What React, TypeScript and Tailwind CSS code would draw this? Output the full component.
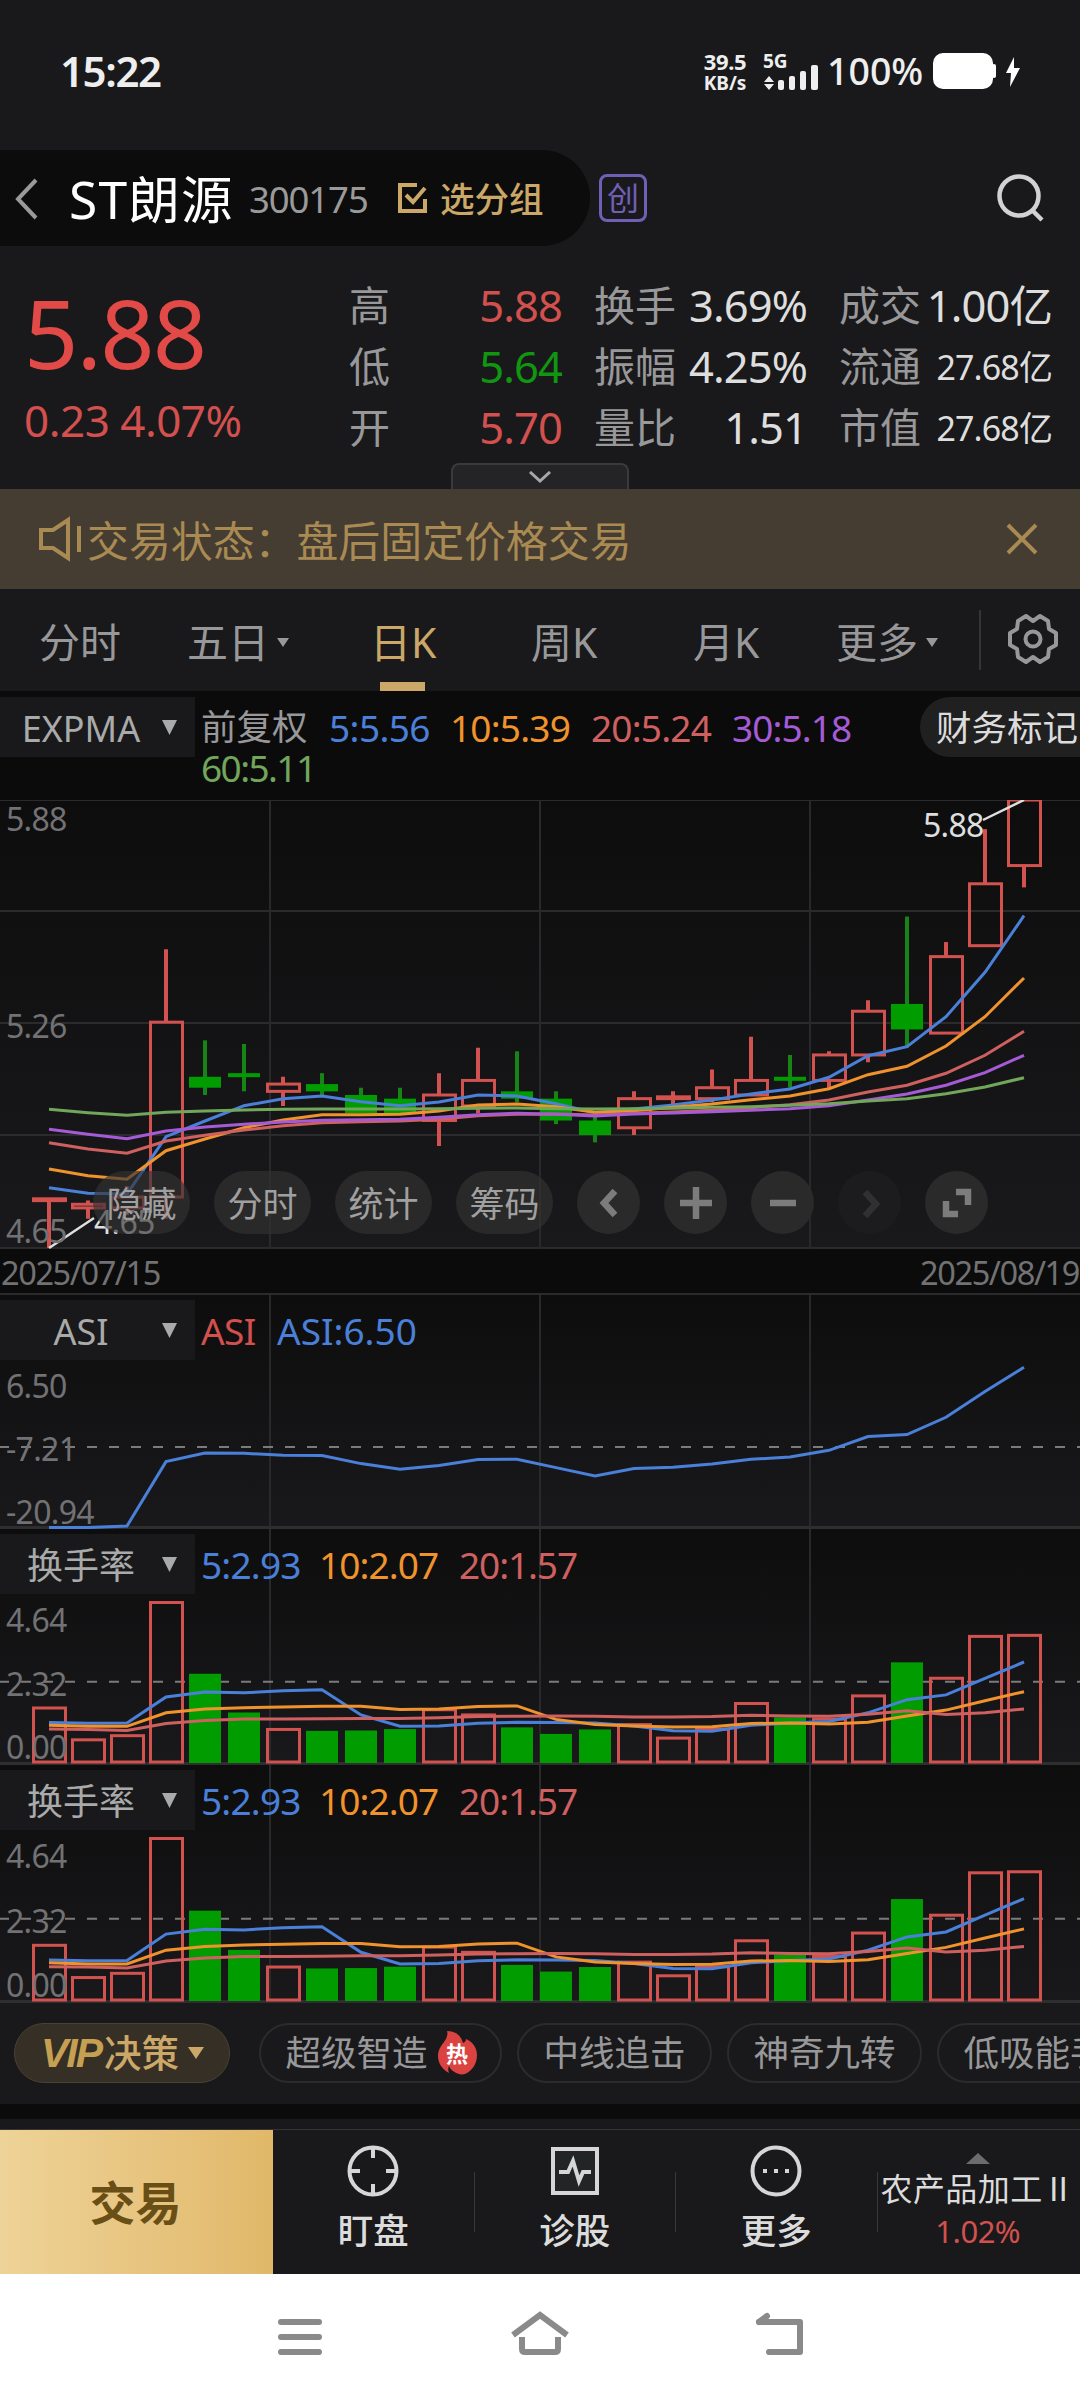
import type { ReactNode } from "react";
import clsx from "clsx";

// ============================================================
// Data
// ============================================================

const RED = "#d2524f";
const GREEN = "#009c00";
const BLUE = "#4a80d9";
const ORANGE = "#f1932c";
const ROSE = "#cf6060";
const PURPLE = "#a65bd6";
const LIME = "#71a65b";

const FIRST_X = 49;
const STEP = 39;

// open, close, high, low
type Candle = [number, number, number, number];

const CANDLES: Candle[] = [
  [4.78, 4.785, 4.785, 4.65],
  [4.76, 4.77, 4.78, 4.73],
  [4.76, 4.79, 4.82, 4.74],
  [4.79, 5.27, 5.47, 4.73],
  [5.12, 5.09, 5.22, 5.07],
  [5.13, 5.12, 5.21, 5.08],
  [5.08, 5.1, 5.12, 5.04],
  [5.1, 5.08, 5.13, 5.07],
  [5.07, 5.02, 5.09, 5.02],
  [5.06, 5.02, 5.09, 5.02],
  [5.0, 5.07, 5.13, 4.93],
  [5.04, 5.11, 5.2, 5.02],
  [5.08, 5.06, 5.19, 5.05],
  [5.06, 5.0, 5.08, 4.99],
  [5.0, 4.96, 5.01, 4.94],
  [4.98, 5.06, 5.08, 4.96],
  [5.06, 5.065, 5.08, 5.04],
  [5.06, 5.09, 5.14, 5.05],
  [5.07, 5.11, 5.23, 5.07],
  [5.12, 5.11, 5.18, 5.09],
  [5.11, 5.18, 5.19, 5.09],
  [5.18, 5.3, 5.33, 5.16],
  [5.32, 5.25, 5.56, 5.2],
  [5.24, 5.45, 5.49, 5.24],
  [5.48, 5.65, 5.8, 5.48],
  [5.7, 5.88, 5.88, 5.64],
];

// Average lines, in thirds of a pixel below the top of the plot
const PRICE_LINES: { color: string; points: number[] }[] = [
  { color: BLUE, points: [1163, 1180, 1182, 1010, 963, 917, 896, 888, 905, 917, 906, 885, 888, 911, 938, 927, 915, 900, 882, 867, 832, 767, 740, 650, 517, 347] },
  { color: ORANGE, points: [1107, 1127, 1138, 1052, 1017, 983, 960, 944, 944, 943, 933, 915, 912, 920, 937, 932, 922, 912, 899, 888, 866, 824, 799, 738, 650, 534] },
  { color: ROSE, points: [1028, 1047, 1060, 1023, 1006, 990, 977, 968, 965, 963, 958, 947, 943, 942, 945, 940, 936, 931, 923, 914, 900, 876, 856, 820, 766, 694] },
  { color: PURPLE, points: [988, 1003, 1016, 993, 981, 973, 966, 961, 959, 958, 952, 944, 940, 943, 948, 942, 939, 935, 931, 926, 917, 900, 882, 856, 818, 766] },
  { color: LIME, points: [928, 938, 946, 937, 933, 930, 928, 927, 927, 927, 926, 925, 924, 926, 927, 926, 925, 922, 920, 916, 911, 903, 896, 881, 861, 833] },
];

const ASI_POINTS = [700, 700, 695, 502, 476, 477, 483, 484, 508, 525, 514, 496, 495, 520, 545, 523, 519, 509, 495, 488, 468, 427, 421, 369, 292, 219];

const TURNOVER = [1.59, 0.67, 0.79, 4.64, 2.58, 1.46, 0.97, 0.93, 0.94, 0.98, 1.54, 1.39, 1.03, 0.84, 0.97, 1.11, 0.72, 0.98, 1.72, 1.32, 1.27, 1.94, 2.91, 2.45, 3.66, 3.69];

const TURNOVER_LINES: { color: string; points: number[] }[] = [
  { color: BLUE, points: [1.17, 1.15, 1.16, 1.91, 2.05, 2.03, 2.09, 2.12, 1.39, 1.06, 1.07, 1.15, 1.18, 1.17, 1.16, 1.07, 0.93, 0.92, 1.09, 1.16, 1.2, 1.45, 1.83, 1.97, 2.45, 2.92] },
  { color: ORANGE, points: [1.09, 1.06, 1.06, 1.45, 1.56, 1.6, 1.62, 1.64, 1.64, 1.55, 1.56, 1.63, 1.65, 1.26, 1.11, 1.07, 1.04, 1.05, 1.14, 1.16, 1.13, 1.18, 1.36, 1.53, 1.8, 2.06] },
  { color: ROSE, points: [0.98, 0.97, 0.94, 1.14, 1.23, 1.27, 1.27, 1.28, 1.29, 1.29, 1.31, 1.34, 1.35, 1.36, 1.35, 1.33, 1.33, 1.34, 1.38, 1.36, 1.35, 1.41, 1.51, 1.4, 1.45, 1.56] },
];

const xAt = (i: number) => FIRST_X + i * STEP;
const toPoints = (ys: number[]) => ys.map((y, i) => `${xAt(i)},${y.toFixed(1)}`).join(" ");

// ============================================================
// Status bar and header
// ============================================================

function StatusBar() {
  return (
    <div className="flex h-[150px] items-start pl-[60px] pt-[50px] text-[#eee]">
      <span className="w-[642px] text-[42px] font-semibold leading-[42px] tracking-[-1.4px]">15:22</span>
      <div className="flex w-[46px] flex-col items-center text-[22px] font-bold leading-[22px]">
        <span className="tracking-[-0.4px]">39.5</span>
        <span className="text-[19px]">KB/s</span>
      </div>
      <svg className="ml-[14px] h-[42px] w-[62px]" viewBox="0 0 62 42" fill="#eee">
        <text x="1" y="18" fontSize="19" fontWeight="700">5G</text>
        <path d="M7 26l5 6H2zM7 40l5-6H2z" />
        <rect x="16" y="30" width="6" height="10" rx="2" />
        <rect x="27" y="26" width="6" height="14" rx="2" />
        <rect x="38" y="21" width="6" height="19" rx="2" />
        <rect x="49" y="15" width="7" height="25" rx="2" />
      </svg>
      <span className="ml-[3px] w-[105px] text-[37.5px] font-medium leading-[42px]">100%</span>
      <svg className="mt-[3px] h-[37px] w-[90px]" viewBox="0 0 90 37" fill="#fff">
        <rect x="1" y="0" width="60" height="36" rx="10" />
        <rect x="60" y="11" width="4" height="14" rx="2" />
        <path d="M82 4L74 20h5l-1 14 10-19h-6z" />
      </svg>
    </div>
  );
}

function Header() {
  return (
    <div className="flex h-[96px] items-center">
      <div className="flex h-full w-[590px] items-center rounded-r-full bg-[#0c0c0c]">
        <svg className="ml-[14px] h-[44px] w-[26px]" viewBox="0 0 26 44" fill="none" stroke="#9a9a9a" strokeWidth="4">
          <path d="M22 4L4 23l18 19" />
        </svg>
        <span className="ml-[29px] w-[180px] whitespace-nowrap pt-[3px] text-[51.5px] leading-none tracking-[1.2px] text-white">ST朗源</span>
        <span className="w-[148px] pt-[2px] text-[36.5px] leading-none tracking-[-1.1px] text-[#9a9a9b]">300175</span>
        <svg className="h-[32px] w-[32px]" viewBox="0 0 32 32" fill="none" stroke="#cba768" strokeWidth="4">
          <path d="M20 3H3v26h25V17" />
          <path d="M9 13l7 7L28 6" />
        </svg>
        <span className="ml-[11px] pt-[2px] text-[34.5px] font-medium leading-none text-[#cba768]">选分组</span>
      </div>
      <span className="ml-[9px] flex h-[48px] w-[48px] items-center justify-center rounded-[8px] border-[3px] border-[#7060b5] text-[32px] leading-none text-[#7060b5]">
        创
      </span>
      <svg className="ml-[349px] h-[50px] w-[50px]" viewBox="0 0 50 50" fill="none" stroke="#d2d2d3" strokeWidth="4.5">
        <circle cx="23" cy="23" r="19.5" />
        <path d="M36 37l10 10" />
      </svg>
    </div>
  );
}

// ============================================================
// Quote
// ============================================================

function Stat({ label, value, color, small }: { label: string; value: string; color?: string; small?: boolean }) {
  return (
    <div className="flex h-[61px] items-center justify-between">
      <span className="whitespace-nowrap text-[41px] leading-none text-[#98989a]">{label}</span>
      <span className={clsx("whitespace-nowrap leading-none", small ? "text-[34px] tracking-[-0.9px]" : "text-[43.5px] tracking-[-0.9px]", color ?? "text-[#dedede]")}>
        {value}
      </span>
    </div>
  );
}

function Quote() {
  return (
    <div className="flex h-[243px] flex-col">
      <div className="flex h-[217px] pt-[29px]">
        <div className="w-[349px] pl-[24px] text-[#e24a47]">
          <p className="mt-[9px] text-[95px] leading-[96px] tracking-[-1.8px]">5.88</p>
          <p className="mt-[15px] whitespace-nowrap text-[44px] leading-[50px] tracking-[-0.5px] text-[#d2504e]">0.23 4.07%</p>
        </div>
        <div className="w-[213px]">
          <Stat label="高" value="5.88" color="text-[#d2504e]" />
          <Stat label="低" value="5.64" color="text-[#119611]" />
          <Stat label="开" value="5.70" color="text-[#d2504e]" />
        </div>
        <div className="ml-[32px] w-[213px]">
          <Stat label="换手" value="3.69%" />
          <Stat label="振幅" value="4.25%" />
          <Stat label="量比" value="1.51" />
        </div>
        <div className="ml-[32px] w-[213px]">
          <Stat label="成交" value="1.00亿" />
          <Stat label="流通" value="27.68亿" small />
          <Stat label="市值" value="27.68亿" small />
        </div>
      </div>
      <div className="mx-auto flex h-[26px] w-[178px] items-center justify-center rounded-t-[8px] border-2 border-b-0 border-[#3a3a3b] bg-[#242427]">
        <svg className="h-[12px] w-[22px]" viewBox="0 0 22 12" fill="none" stroke="#a8a8a9" strokeWidth="3">
          <path d="M1 1l10 9L21 1" />
        </svg>
      </div>
    </div>
  );
}

function Notice() {
  return (
    <div className="flex h-[100px] items-center bg-[#453d32] text-[#a98a52]">
      <svg className="ml-[38px] h-[46px] w-[46px]" viewBox="0 0 46 46" fill="none" stroke="currentColor" strokeWidth="4">
        <path d="M3 14h12L30 4v38L15 32H3z" />
        <path d="M41 10v26" />
      </svg>
      <span className="ml-[3px] w-[919px] pt-[3px] text-[41.9px] leading-none">交易状态：盘后固定价格交易</span>
      <svg className="h-[32px] w-[32px]" viewBox="0 0 32 32" fill="none" stroke="currentColor" strokeWidth="4">
        <path d="M2 2l28 28M30 2L2 30" />
      </svg>
    </div>
  );
}

// ============================================================
// Period tabs
// ============================================================

function Caret({ className }: { className: string }) {
  return (
    <svg className={className} viewBox="0 0 10 10" preserveAspectRatio="none" fill="currentColor">
      <path d="M0 0h10L5 10z" />
    </svg>
  );
}

function Tab({ label, className, caret, active }: { label: string; className: string; caret?: boolean; active?: boolean }) {
  return (
    <div className={clsx("flex h-full shrink-0 flex-col", active ? "text-[#cba768]" : "text-[#98989a]", className)}>
      <div className="flex h-[93px] items-center gap-[8px] whitespace-nowrap pt-[14px] text-[41px] leading-none">
        {label}
        {caret && <Caret className="h-[9px] w-[12px]" />}
      </div>
      {active && <div className="ml-[10px] h-[9px] w-[45px] bg-[#cba768]" />}
    </div>
  );
}

function Tabs() {
  return (
    <div className="flex h-[102px]">
      <Tab label="分时" className="ml-[39px] w-[148px]" />
      <Tab label="五日" className="w-[183px]" caret />
      <Tab label="日K" className="w-[161px]" active />
      <Tab label="周K" className="w-[162px]" />
      <Tab label="月K" className="w-[143px]" />
      <Tab label="更多" className="w-[143px]" caret />
      <div className="mt-[21px] h-[60px] w-[2px] bg-[#353536]" />
      <svg className="ml-[26px] mt-[24px] h-[52px] w-[52px]" viewBox="0 0 52 52" fill="none" stroke="#98989a" strokeWidth="4" strokeLinejoin="round">
        <path d="M19 3l7 5 7-5 8 5 1 8 7 4v12l-7 4-1 8-8 5-7-5-7 5-8-5-1-8-7-4V20l7-4 1-8z" />
        <circle cx="26" cy="26" r="7.5" />
      </svg>
    </div>
  );
}

// ============================================================
// Charts
// ============================================================

function IndicatorPicker({ name }: { name: string }) {
  return (
    <div className="flex h-[60px] w-[195px] shrink-0 items-center bg-[#19191b] text-[#a9aaaa]">
      <span className="w-[162px] pt-[3px] text-center text-[36px] leading-none">{name}</span>
      <Caret className="h-[15px] w-[15px]" />
    </div>
  );
}

function GridVerticals({ height }: { height: number }) {
  return (
    <>
      {[270, 540, 810].map((x) => (
        <path key={x} d={`M${x} 0V${height}`} stroke="#29292b" strokeWidth="2" />
      ))}
    </>
  );
}

function AxisLabel({ y, children, x = 6, fill = "#727274" }: { y: number; children: ReactNode; x?: number; fill?: string }) {
  return (
    <text x={x} y={y} fontSize="32" letterSpacing="-0.7" fill={fill}>
      {children}
    </text>
  );
}

function LegendItem({ className, children }: { className: string; children: ReactNode }) {
  return <span className={clsx("shrink-0 whitespace-nowrap text-[37px] leading-none", className)}>{children}</span>;
}

function PriceLegend() {
  return (
    <div className="flex h-[109px] overflow-hidden bg-[#0b0b0b] pt-[6px]">
      <IndicatorPicker name="EXPMA" />
      <div className="ml-[6px] w-[719px] shrink-0">
        <div className="flex h-[60px] items-center">
          <span className="w-[128px] text-[35.5px] leading-none text-[#98989a]">前复权</span>
          <LegendItem className="w-[121px] tracking-[-0.6px] text-[#4a80d9]">5:5.56</LegendItem>
          <LegendItem className="w-[141px] tracking-[-0.8px] text-[#f1932c]">10:5.39</LegendItem>
          <LegendItem className="w-[141px] tracking-[-0.8px] text-[#cf6060]">20:5.24</LegendItem>
          <LegendItem className="tracking-[-0.9px] text-[#a65bd6]">30:5.18</LegendItem>
        </div>
        <LegendItem className="-mt-[8px] block tracking-[-1.6px] text-[#71a65b]">60:5.11</LegendItem>
      </div>
      <div className="flex h-[60px] w-[200px] shrink-0 items-center rounded-l-full bg-[#202021] pl-[16px] text-[35.5px] leading-none text-[#dcdcdc]">
        <span className="whitespace-nowrap pt-[2px]">财务标记</span>
      </div>
    </div>
  );
}

function CandleShape({ candle, index }: { candle: Candle; index: number }) {
  const [open, close, high, low] = candle;
  const y = (price: number) => (5.88 - price) * 364.2;
  const x = xAt(index);
  const top = y(Math.max(open, close));
  const bottom = y(Math.min(open, close));

  if (close < open) {
    return (
      <g>
        <path d={`M${x} ${y(high)}V${y(low)}`} stroke="#168516" strokeWidth="4" />
        <rect x={x - 16} y={top} width="32" height={Math.max(bottom - top, 4)} fill={GREEN} />
      </g>
    );
  }
  return (
    <g fill="none" stroke={RED}>
      <path d={`M${x} ${y(high)}V${top}M${x} ${bottom}V${y(low)}`} strokeWidth="4" />
      <rect x={x - 15.5} y={top} width="32" height={bottom - top} strokeWidth="3" />
    </g>
  );
}

function PriceChart() {
  return (
    <div className="relative h-[449px]">
      <svg className="block h-[449px] w-[1080px]" viewBox="0 0 1080 449">
        <defs>
          <linearGradient id="plot" x1="0" y1="0" x2="0" y2="1">
            <stop offset="0" stopColor="#0d0d0e" />
            <stop offset="1" stopColor="#19191b" />
          </linearGradient>
        </defs>
        <rect width="1080" height="449" fill="url(#plot)" />
        <path d="M0 0H1080M0 111H1080M0 223H1080M0 335H1080M0 448H1080" stroke="#2b2b2d" strokeWidth="2" />
        <GridVerticals height={449} />
        {CANDLES.map((candle, i) => (
          <CandleShape key={i} candle={candle} index={i} />
        ))}
        {PRICE_LINES.map(({ color, points }) => (
          <polyline key={color} points={toPoints(points.map((p) => p / 3))} fill="none" stroke={color} strokeWidth="3" />
        ))}
        <path d="M49 448L94 418M1024 0L983 20" stroke="#dedede" strokeWidth="2.5" />
        <AxisLabel y={31}>5.88</AxisLabel>
        <AxisLabel y={238}>5.26</AxisLabel>
        <AxisLabel y={443}>4.65</AxisLabel>
        <AxisLabel x={94} y={434} fill="#dedede">4.65</AxisLabel>
        <AxisLabel x={923} y={37} fill="#dedede">5.88</AxisLabel>
      </svg>
      <ChartControls />
    </div>
  );
}

function RoundButton({ dim, children }: { dim?: boolean; children: ReactNode }) {
  return (
    <div className={clsx("flex h-[63px] w-[63px] items-center justify-center rounded-full", dim ? "bg-[#1c1c1e] text-[#303031]" : "bg-[#2a2a2b] text-[#7c7c7d]")}>
      <svg className="h-[36px] w-[36px]" viewBox="0 0 36 36" fill="none" stroke="currentColor" strokeWidth="6.5">
        {children}
      </svg>
    </div>
  );
}

// Floating buttons over the lower edge of the price plot
function ChartControls() {
  return (
    <div className="absolute left-[93px] top-[371px] flex gap-[24px]">
      {["隐藏", "分时", "统计", "筹码"].map((label) => (
        <div key={label} className="flex h-[63px] w-[97px] items-center justify-center rounded-full bg-[#323233]/65 text-[35px] leading-none text-[#a0a0a0]">
          <span className="whitespace-nowrap pt-[2px]">{label}</span>
        </div>
      ))}
      <RoundButton>
        <path d="M24 6L13 18l11 12" />
      </RoundButton>
      <RoundButton>
        <path d="M18 2v32M2 18h32" />
      </RoundButton>
      <RoundButton>
        <path d="M5 18h26" />
      </RoundButton>
      <RoundButton dim>
        <path d="M13 7l11 12-11 12" />
      </RoundButton>
      <RoundButton>
        <path d="M17 7h12v13M7 16v13h12" />
      </RoundButton>
    </div>
  );
}

function PanelBackground({ height, mid }: { height: number; mid: number }) {
  return (
    <>
      <rect width="1080" height={height} fill="url(#plot)" />
      <GridVerticals height={height} />
      <path d={`M0 ${height - 1.5}H1080`} stroke="#2e2e30" strokeWidth="3" />
      <path d={`M-1 ${mid}H1080`} stroke="#7b7b7d" strokeWidth="2" strokeDasharray="10 12" />
    </>
  );
}

function AsiPanel() {
  return (
    <div className="relative h-[236px] border-t-2 border-[#2b2b2d]">
      <svg className="absolute left-0 top-0 h-[234px] w-[1080px]" viewBox="0 0 1080 234">
        <PanelBackground height={234} mid={152} />
        <AxisLabel y={103}>6.50</AxisLabel>
        <AxisLabel y={166}>-7.21</AxisLabel>
        <AxisLabel y={229}>-20.94</AxisLabel>
        <polyline points={toPoints(ASI_POINTS.map((p) => p / 3 - 0.7))} fill="none" stroke={BLUE} strokeWidth="3" />
      </svg>
      <div className="relative flex items-center pt-[5px]">
        <IndicatorPicker name="ASI" />
        <LegendItem className="ml-[6px] w-[76px] tracking-[-0.6px] text-[#d2504e]">ASI</LegendItem>
        <LegendItem className="text-[#4a80d9]">ASI:6.50</LegendItem>
      </div>
    </div>
  );
}

function TurnoverPanel({ height }: { height: number }) {
  const base = height - 2;
  const unit = (base - 73.5) / 4.64;
  const y = (value: number) => base - value * unit;
  const mid = y(2.32);

  return (
    <div className="relative" style={{ height }}>
      <svg className="absolute left-0 top-0 w-[1080px]" viewBox={`0 0 1080 ${height}`} height={height}>
        <PanelBackground height={height} mid={mid - 1} />
        {TURNOVER.map((value, i) => {
          const [open, close] = CANDLES[i];
          return close < open ? (
            <rect key={i} x={xAt(i) - 16} y={y(value)} width="32" height={base - y(value)} fill={GREEN} />
          ) : (
            <rect key={i} x={xAt(i) - 15.5} y={y(value)} width="32" height={base - y(value) - 1} fill="none" stroke={RED} strokeWidth="3" />
          );
        })}
        {TURNOVER_LINES.map(({ color, points }) => (
          <polyline key={color} points={toPoints(points.map(y))} fill="none" stroke={color} strokeWidth="3" />
        ))}
        <AxisLabel y={103}>4.64</AxisLabel>
        <AxisLabel y={mid + 13}>2.32</AxisLabel>
        <AxisLabel y={base - 4}>0.00</AxisLabel>
      </svg>
      <div className="relative flex items-center pt-[5px]">
        <IndicatorPicker name="换手率" />
        <LegendItem className="ml-[6px] w-[118px] tracking-[-0.8px] text-[#4a80d9]">5:2.93</LegendItem>
        <LegendItem className="w-[140px] tracking-[-0.9px] text-[#f1932c]">10:2.07</LegendItem>
        <LegendItem className="tracking-[-1.1px] text-[#cf6060]">20:1.57</LegendItem>
      </div>
    </div>
  );
}

// ============================================================
// Strategy chips
// ============================================================

function Chip({ children }: { children: ReactNode }) {
  return (
    <div className="flex h-[60px] shrink-0 items-center whitespace-nowrap rounded-full border-2 border-[#2b2b2d] px-[24.5px] text-[35.5px] leading-none text-[#98989a]">
      {children}
    </div>
  );
}

function StrategyRow() {
  return (
    <div className="flex h-[101px] gap-[15px] overflow-hidden pl-[14px] pt-[20px]">
      <div className="mr-[14px] flex h-[60px] w-[216px] shrink-0 items-center rounded-full border border-[#4a4231] bg-[#352f26] pl-[26px] text-[#cba768]">
        <span className="w-[63px] font-['Liberation_Sans',sans-serif] text-[41px] font-bold italic leading-none tracking-[-2px] text-[#c6a052]">VIP</span>
        <span className="whitespace-nowrap text-[37.5px] font-medium leading-none">决策</span>
        <Caret className="ml-[9px] h-[12px] w-[16px]" />
      </div>
      <Chip>
        <span>超级智造</span>
        <span className="ml-[9px] mr-[-2px] grid h-[44px] w-[41px] place-items-center">
          <svg className="col-start-1 row-start-1 h-[44px] w-[41px]" viewBox="0 0 41 44" fill="#db4340">
            <path d="M10 0c8 0 14 4 16 12 2-1 3-2 3-4 7 3 11 9 11 16 0 9-5 16-12 19-4 1-8 0-12-3-2-1-3-3-4-5-1 2-1 4 0 7C5 38 1 32 1 25 1 17 6 13 9 8c1-3 2-5 1-8z" />
          </svg>
          <span className="col-start-1 row-start-1 text-[22px] font-bold leading-none text-white">热</span>
        </span>
      </Chip>
      <Chip>中线追击</Chip>
      <Chip>神奇九转</Chip>
      <Chip>低吸能手</Chip>
    </div>
  );
}

// ============================================================
// Bottom bars
// ============================================================

function Action({ label, children }: { label: string; children: ReactNode }) {
  return (
    <div className="flex h-full w-[201.5px] items-center justify-between">
      <div className="flex h-full w-[201px] flex-col items-center pt-[14px]">
        <svg className="h-[54px] w-[54px]" viewBox="0 0 54 54" fill="none" stroke="#d6d6d7" strokeWidth="4">
          {children}
        </svg>
        <span className="mt-[15px] text-[35.5px] font-medium leading-none text-[#dcdcdc]">{label}</span>
      </div>
      <div className="h-[60px] w-px shrink-0 bg-[#38383a]" />
    </div>
  );
}

function ActionBar() {
  return (
    <div className="flex h-[145px] border-t border-[#343435]">
      <div className="flex w-[273px] items-center justify-center bg-gradient-to-r from-[#eed398] to-[#e1b869] pr-[2px] text-[46px] font-bold leading-none text-[#694f16]">
        交易
      </div>
      <Action label="盯盘">
        <circle cx="27" cy="27" r="23.5" />
        <path d="M27 3v11M27 51V40M3 27h11M51 27H40" />
      </Action>
      <Action label="诊股">
        <rect x="5" y="5" width="44" height="44" fill="#232426" />
        <path d="M11 28h9l5-11 6 20 4-9h8" />
      </Action>
      <Action label="更多">
        <circle cx="27" cy="27" r="23.5" />
        <path d="M14 27h4M25 27h4M36 27h4" />
      </Action>
      <div className="flex flex-1 flex-col items-center pr-[2px] pt-[23px]">
        <Caret className="h-[11px] w-[24px] rotate-180 text-[#6c6c6e]" />
        <span className="mt-[9px] whitespace-nowrap text-[32px] leading-none tracking-[0.4px] text-[#dcdcdc]">农产品加工Ⅱ</span>
        <span className="mt-[11px] text-[31px] leading-none tracking-[-0.5px] text-[#d2504e]">1.02%</span>
      </div>
    </div>
  );
}

function SystemNav() {
  return (
    <div className="flex h-[126px] items-start justify-between bg-white px-[270px] pt-[34px]">
      <svg className="h-[60px] w-[60px]" viewBox="0 0 60 60" fill="none" stroke="#8a8a8a" strokeWidth="6" strokeLinecap="round">
        <path d="M11 14h38M11 29h38M11 44h38" />
      </svg>
      <svg className="h-[60px] w-[60px]" viewBox="0 0 60 60" fill="none" stroke="#8a8a8a" strokeWidth="6">
        <path d="M3 27L30 7l27 20" />
        <path d="M12 29v12q0 3 3 3h30q3 0 3-3V29" />
      </svg>
      <svg className="h-[60px] w-[60px]" viewBox="0 0 60 60" fill="none" stroke="#8a8a8a" strokeWidth="6" strokeLinecap="round" strokeLinejoin="round">
        <path d="M9 14h41v30H19" />
        <path d="M9 14l8-6" />
      </svg>
    </div>
  );
}

export default function App() {
  return (
    <div className="h-[2400px] w-[1080px] overflow-hidden bg-[#19191b] font-['Noto_Sans','Noto_Sans_CJK_SC',sans-serif]">
      <StatusBar />
      <Header />
      <Quote />
      <Notice />
      <Tabs />
      <PriceLegend />
      <PriceChart />
      <div className="flex h-[44px] items-center justify-between bg-[#0b0b0b] px-[1px] pt-[4px] text-[32.5px] leading-none tracking-[-1.4px] text-[#727274]">
        <span>2025/07/15</span>
        <span>2025/08/19</span>
      </div>
      <AsiPanel />
      <TurnoverPanel height={236} />
      <TurnoverPanel height={238} />
      <StrategyRow />
      <div className="h-[15px] bg-[#0b0b0b]" />
      <div className="h-[10px]" />
      <ActionBar />
      <SystemNav />
    </div>
  );
}
